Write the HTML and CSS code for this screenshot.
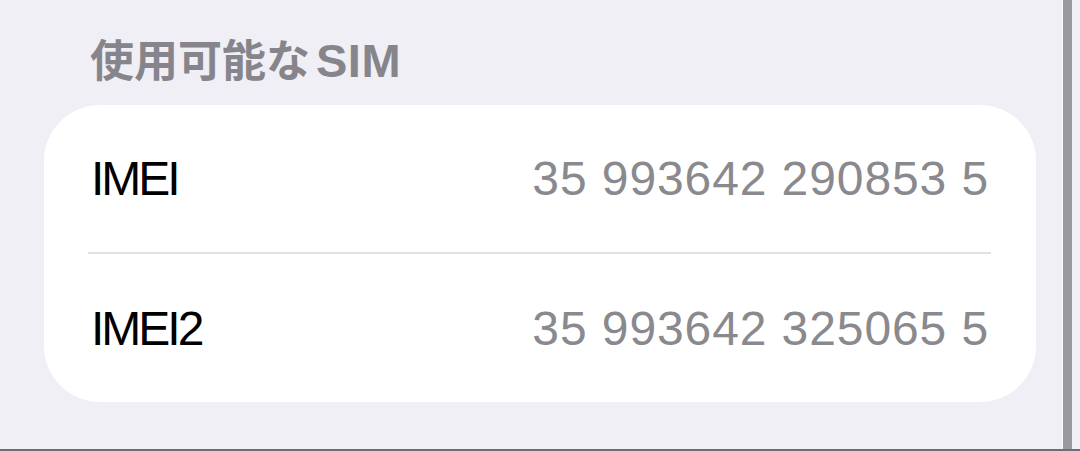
FILE: index.html
```html
<!DOCTYPE html>
<html lang="ja">
  <head>
    <meta charset="UTF-8" />
    <meta name="viewport" content="width=device-width, initial-scale=1.0" />
    <title>使用可能なSIM</title>
    <link rel="stylesheet" href="styles.css">
  </head>
  <body>
    <div id="screen">
      <div id="settings">
        <h2 class="section-title">使用可能な<span class="latin">SIM</span></h2>
        <div class="group">
          <div class="row">
            <span class="label">IMEI</span>
            <span class="value">35 993642 290853 5</span>
          </div>
          <div class="divider"></div>
          <div class="row">
            <span class="label">IMEI2</span>
            <span class="value">35 993642 325065 5</span>
          </div>
        </div>
      </div>
      <!-- 画面右端の枠 -->
      <div id="edge"></div>
    </div>
  </body>
</html>
```

FILE: styles.css
```css
html {
  height: 100%;
}
body {
  height: 100%;
  margin: 0;
  background-color: #f0eff5;
}

#screen {
  display: flex;
  box-sizing: border-box;
  height: 451px;
  padding-right: 8px;
  border-bottom: 2px solid #6f6e73;
  font-family: "Liberation Sans", "Noto Sans CJK JP", sans-serif;
}

#settings {
  flex: 1;
  min-width: 0;
  padding: 0 26px 0 44px;
}

.section-title {
  margin: 0;
  padding: 36px 0 0 46px;
  height: 105px;
  box-sizing: border-box;
  font-size: 44px;
  line-height: 50px;
  font-weight: bold;
  color: #86858b;
}
.section-title .latin {
  margin-left: 6px;
  font-size: 47px;
  letter-spacing: 0.5px;
}

.group {
  background: #fff;
  border-radius: 56px;
  overflow: hidden;
}

.row {
  display: flex;
  justify-content: space-between;
  align-items: center;
  height: 147px;
  padding: 0 47px 0 47px;
  font-size: 48px;
}
.row:last-child {
  height: 148px;
}

.label {
  color: #000;
  letter-spacing: -3px;
}

.value {
  color: #8a898e;
  letter-spacing: 0.9px;
}

.divider {
  height: 2px;
  margin: 0 45px 0 44px;
  background: #e2e1e5;
}

#edge {
  flex: 0 0 9px;
  border-left: 1px solid #fbfbfd;
  background: #9a999e;
}
```
